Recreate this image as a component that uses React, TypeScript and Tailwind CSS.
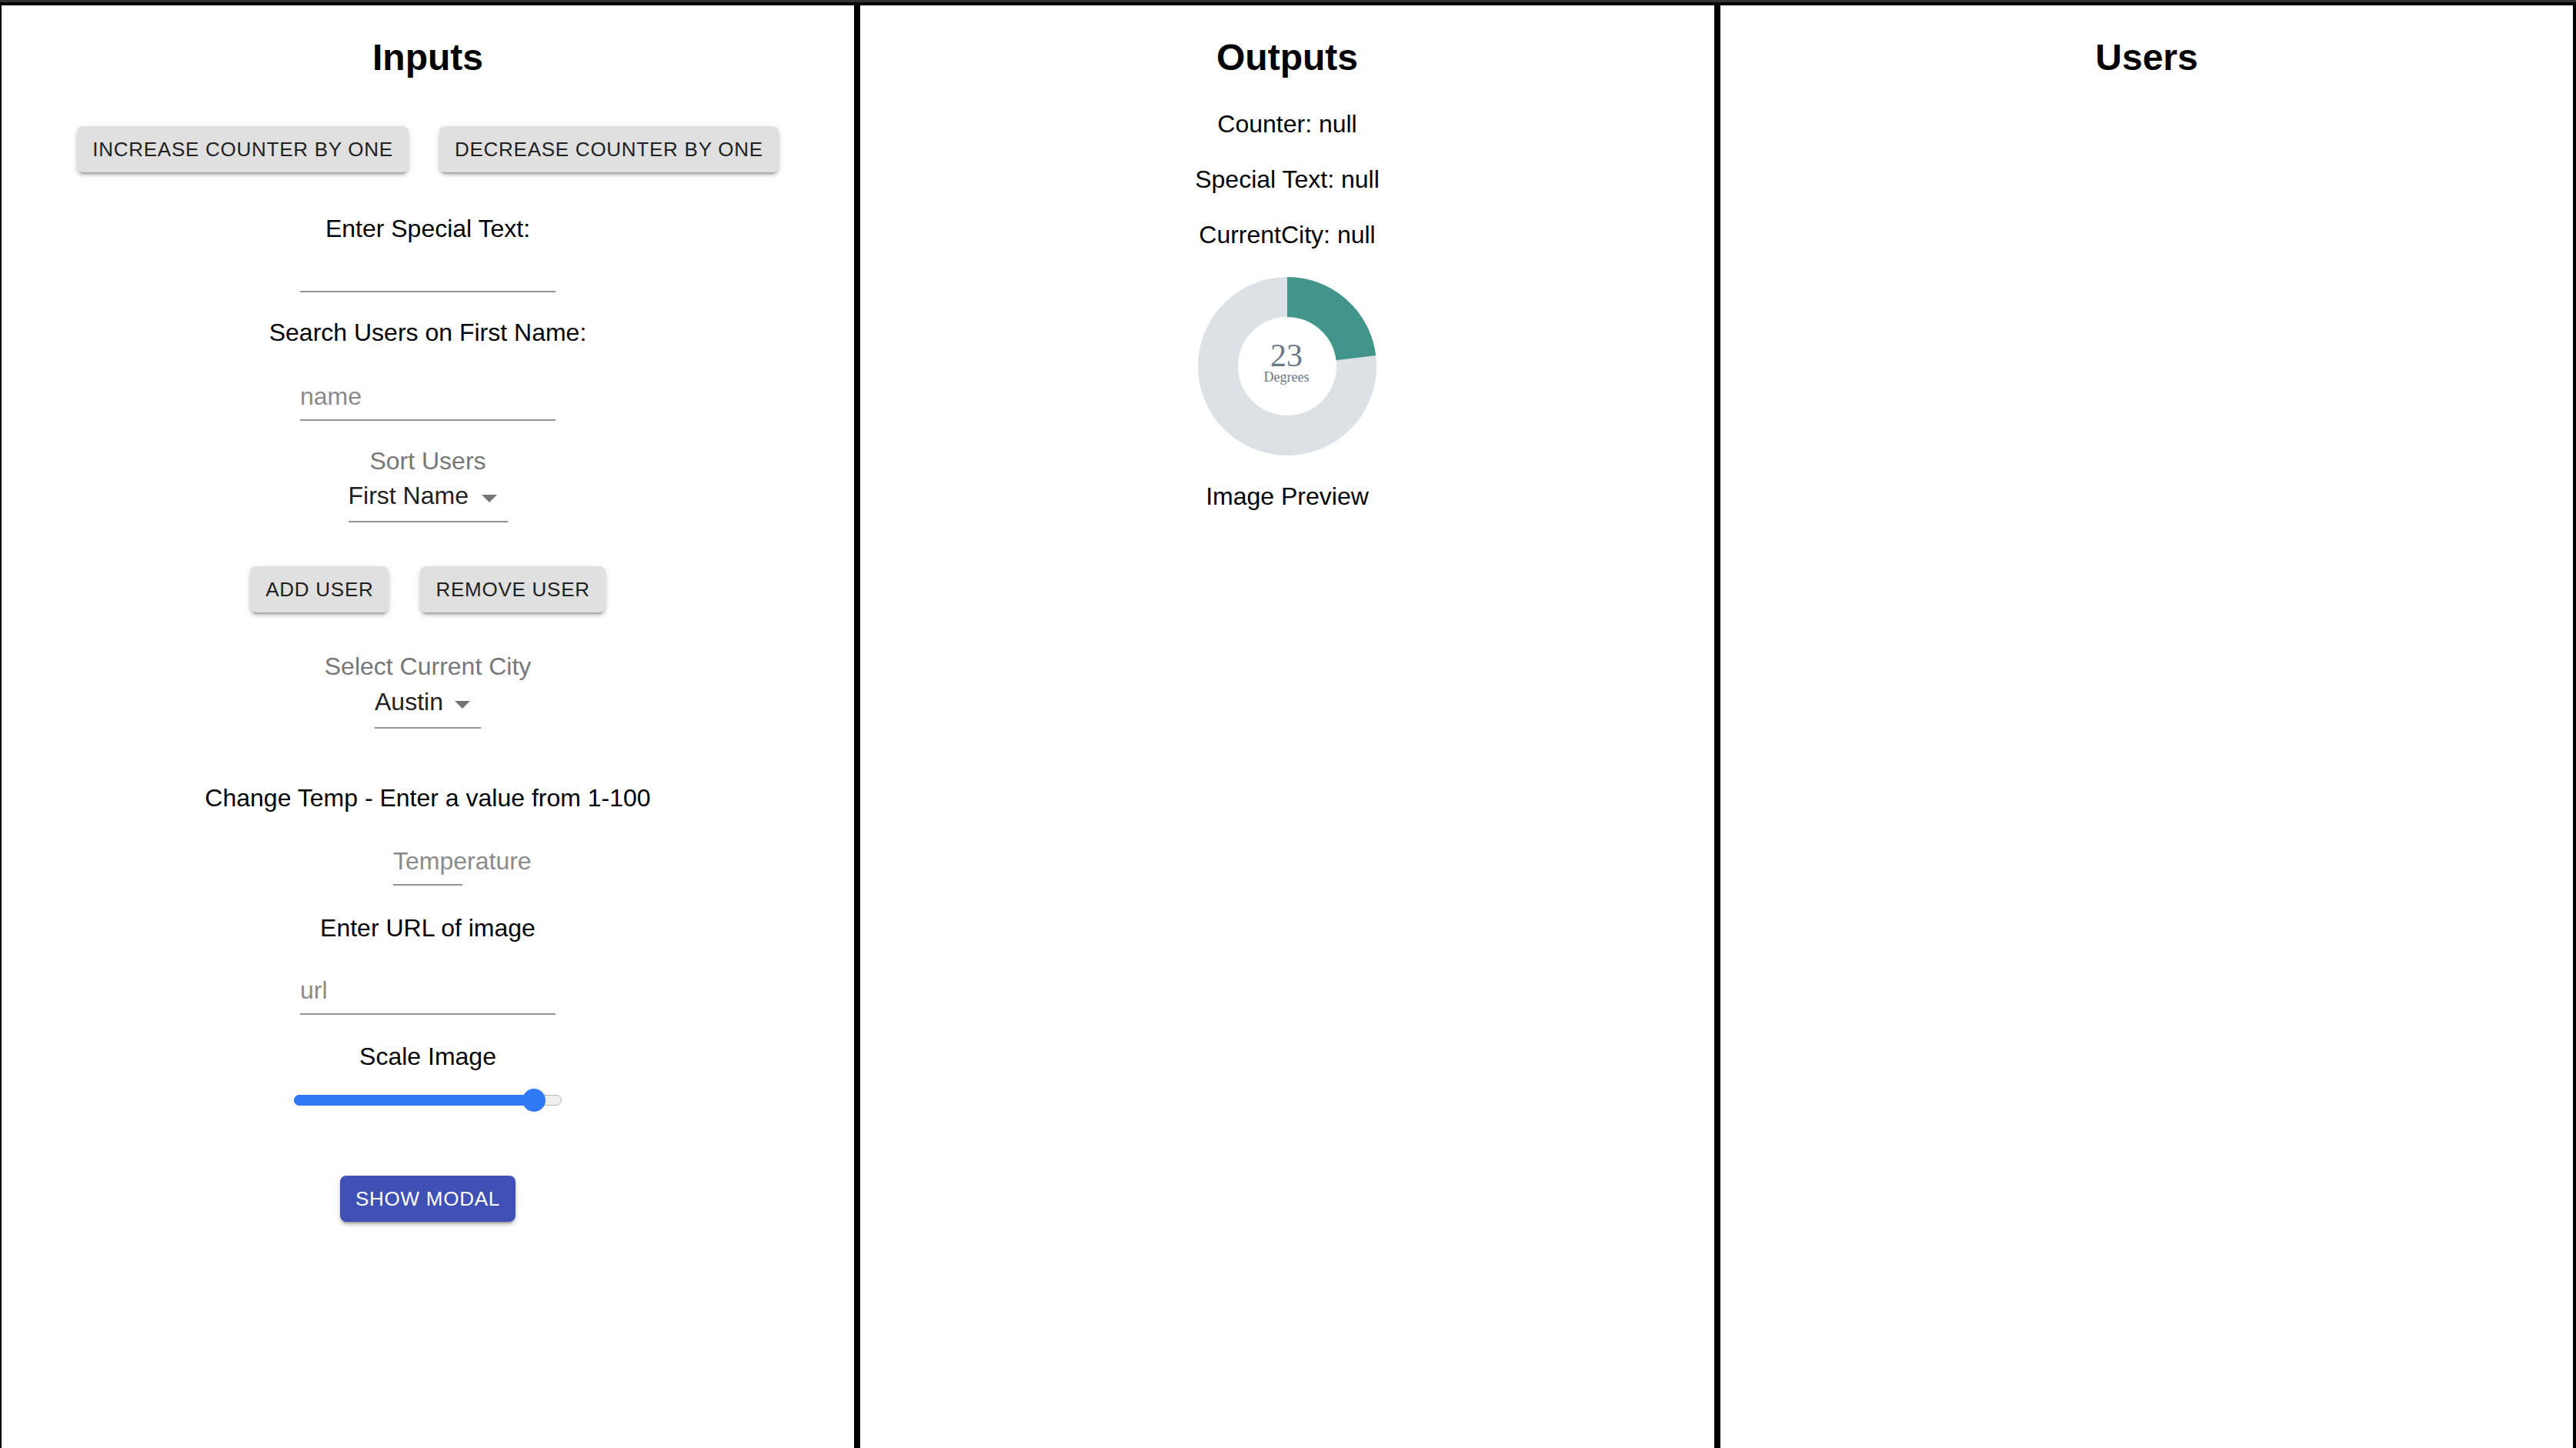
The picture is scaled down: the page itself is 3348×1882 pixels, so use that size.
import React from "react";

const BTN_SHADOW =
  "shadow-[0_6px_2px_-4px_rgba(0,0,0,0.2),0_4px_4px_0_rgba(0,0,0,0.14),0_2px_10px_0_rgba(0,0,0,0.12)]";

function Heading({ children }: { children: React.ReactNode }) {
  return <h2 className="mt-[40px] text-[48px] leading-[56px] font-bold text-black">{children}</h2>;
}

function Text({ children, mt }: { children: React.ReactNode; mt: string }) {
  return <p className={`${mt} text-[32px] leading-[36px] text-black whitespace-nowrap`}>{children}</p>;
}

function GreyButton({ children }: { children: React.ReactNode }) {
  return (
    <button
      className={`h-[60px] px-[20px] rounded-[8px] bg-[#e0e0e0] text-[#212121] text-[26px] tracking-[0.74px] uppercase ${BTN_SHADOW}`}
    >
      {children}
    </button>
  );
}

function ArrowDrop() {
  return (
    <svg className="absolute right-0 top-[-3px]" width="48" height="48" viewBox="0 0 24 24">
      <path d="M7 10l5 5 5-5z" fill="rgba(0,0,0,0.54)" />
    </svg>
  );
}

export default function App() {
  return (
    <div className="h-screen flex flex-col bg-white font-[family-name:'Liberation_Sans',Arial,sans-serif]">
      <div className="h-[3px] bg-[#333] shrink-0" />
      <div className="flex flex-1 min-h-0">
        {/* Inputs */}
        <section className="w-[1114px] shrink-0 border-t-4 border-l-2 border-r-4 border-black flex flex-col items-center">
          <Heading>Inputs</Heading>
          <div className="mt-[61px] flex gap-[40px]">
            <GreyButton>Increase counter by one</GreyButton>
            <GreyButton>Decrease counter by one</GreyButton>
          </div>

          <Text mt="mt-[55px]">Enter Special Text:</Text>
          <div className="mt-[15px] w-[332px] h-[50px] border-b-2 border-[#949494]" />

          <Text mt="mt-[34px]">Search Users on First Name:</Text>
          <div className="mt-[47px] w-[332px] pb-[12px] border-b-2 border-[#949494] text-[32px] leading-[36px] text-[#8a8a8a]">
            name
          </div>

          <p className="mt-[34px] text-[32px] leading-[36px] text-[#777]">Sort Users</p>
          <div className="relative mt-[9px] w-[207px] pb-[15px] border-b-2 border-[#949494] text-[32px] leading-[36px] text-[#212121]">
            First Name
            <ArrowDrop />
          </div>

          <div className="mt-[57px] flex gap-[41px]">
            <GreyButton>Add user</GreyButton>
            <GreyButton>Remove user</GreyButton>
          </div>

          <p className="mt-[52px] text-[32px] leading-[36px] text-[#777]">Select Current City</p>
          <div className="relative mt-[10px] w-[138px] pb-[15px] border-b-2 border-[#949494] text-[32px] leading-[36px] text-[#212121]">
            Austin
            <ArrowDrop />
          </div>

          <Text mt="mt-[72px]">Change Temp - Enter a value from 1-100</Text>
          <div className="mt-[46px] w-[90px] pb-[12px] border-b-2 border-[#949494] text-[32px] leading-[36px] text-[#8a8a8a] whitespace-nowrap overflow-visible">
            Temperature
          </div>

          <Text mt="mt-[37px]">Enter URL of image</Text>
          <div className="mt-[45px] w-[332px] pb-[12px] border-b-2 border-[#949494] text-[32px] leading-[36px] text-[#8a8a8a]">
            url
          </div>

          <Text mt="mt-[36px]">Scale Image</Text>
          <div className="relative mt-[24px] w-[348px] h-[30px] flex items-center">
            <div className="w-full h-[14px] rounded-full bg-[#efefef] border border-[#b8b8b8]" />
            <div className="absolute left-0 top-[8px] w-[314px] h-[14px] rounded-full bg-[#3079f5]" />
            <div className="absolute left-[297px] top-0 w-[30px] h-[30px] rounded-full bg-[#3079f5]" />
          </div>

          <button
            className={`mt-[83px] h-[60px] px-[20px] rounded-[8px] bg-[#3f51b5] text-white text-[26px] tracking-[0.74px] uppercase ${BTN_SHADOW}`}
          >
            Show modal
          </button>
        </section>

        {/* Outputs */}
        <section className="w-[1118px] shrink-0 border-t-4 border-x-4 border-black flex flex-col items-center">
          <Heading>Outputs</Heading>
          <Text mt="mt-[40px]">Counter: null</Text>
          <Text mt="mt-[36px]">Special Text: null</Text>
          <Text mt="mt-[36px]">CurrentCity: null</Text>
          <svg className="mt-[37px]" width="232" height="232" viewBox="0 0 232 232">
            <circle cx="116" cy="116" r="90" fill="none" stroke="#dbe1e4" strokeWidth="52" />
            <circle
              cx="116"
              cy="116"
              r="90"
              fill="none"
              stroke="#41958a"
              strokeWidth="52"
              strokeDasharray="130.06 565.49"
              transform="rotate(-90 116 116)"
            />
            <text
              x="115"
              y="115.7"
              textAnchor="middle"
              fontFamily="'Liberation Serif', 'Times New Roman', serif"
              fontSize="42"
              fill="#6b7885"
            >
              23
            </text>
            <text
              x="115"
              y="135.7"
              textAnchor="middle"
              fontFamily="'Liberation Serif', 'Times New Roman', serif"
              fontSize="18"
              fill="#6b7885"
            >
              Degrees
            </text>
          </svg>
          <Text mt="mt-[35px]">Image Preview</Text>
        </section>

        {/* Users */}
        <section className="flex-1 border-t-4 border-x-4 border-black flex flex-col items-center">
          <Heading>Users</Heading>
        </section>
      </div>
    </div>
  );
}
